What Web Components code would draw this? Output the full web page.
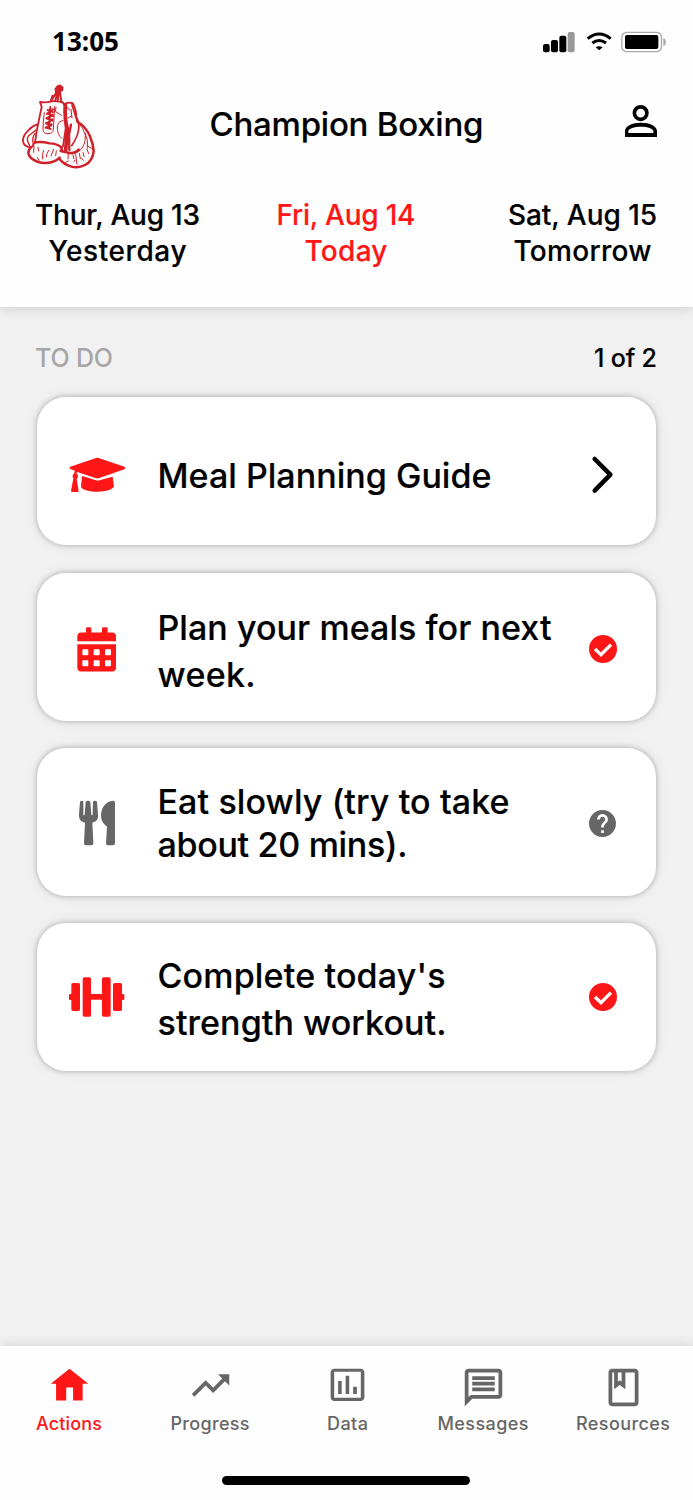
<!DOCTYPE html>
<html lang="en">
<head>
<meta charset="utf-8">
<title>Champion Boxing</title>
<style>
html,body{margin:0;padding:0;background:#fff}
body{width:693px;height:1500px;overflow:hidden;font-family:Inter,"Liberation Sans",sans-serif;font-weight:500;color:#000}
</style>
</head>
<body>
<boxing-app></boxing-app>
<script>
const ICONS = {
gloves: ['0 0 360 330', `<g fill="none" stroke="#d0202a" stroke-linecap="round" stroke-linejoin="round">
<path fill="#d0202a" stroke-width="5" d="M166 57l6-8 8-3 8 6-1 9-8 4 2 6-9 3-4-7z"/>
<path stroke-width="6" d="M170 66l-17 27M172 70l-7 24M176 68l-3 26M180 68l4 26M158 77l-6 17"/>
<path stroke-width="5.500" d="M120 96q18 3 34-2 17-2 34 4M120 96l5 15-6 28-9 45-5 34M188 97l6 10 3 70-8 52M196 101q10-5 20-2l1 8 11 35 4 14"/>
<path stroke-width="11" d="M196 104q-3 40 6 74l-5 62"/>
<path stroke-width="7" d="M207 180l1 60M213 164l-5 26M105 217q20-3 44 3 22 0 36 13"/>
<path stroke-width="5.500" d="M112 163q-15 4-27 18-18 17-16 34 4 15 25 18l11-16"/>
<path stroke-width="4" d="M108 180l-22 17q-9 9 3 30M105 190q-10 11-5 34"/>
<path stroke-width="7.500" d="M92 232q-14 18 1 32 19 16 46 15 25-1 40-16M184 232l2 11M178 266q13 17 34 23 22 7 43-4 23-12 26-41-1-21-11-45-12-28-36-43"/>
<path stroke-width="8" d="M182 243q16 3 26 6 18 2 28-10"/>
<path stroke-width="5" d="M218 99q12 22 11 42 20 37-14 86"/>
<path stroke-width="3" d="M232 155q20 20 24 40 2 36-23 52M256 190q10 22 6 45M133 128l-3 25-1 27q2 12 15 11 15 0 16-12l4-70M168 112l-2 12 18 12M190 152q-15 0-18 18-1 23 13 35M201 111l8 10M213 118l3 26M204 144l11-6"/>
<path stroke-width="6" d="M143 120l16 6M159 118l-18 14M142 130l17 8M158 134l-18 11M139 145l18 7M157 148l-18 13M138 159l16 8M155 163l-18 10M139 173l13 4M151 111l-3 62"/>
<path stroke-width="3" d="M102 229l-1 18M114 232l2 11M131 241q-7 13-3 26M146 241q-7 10-7 20M161 238l-8 20M112 262l5 9M169 242l-2 15M205 251l-1 16M219 255l3 12M227 253l4 30M238 250l3 16M249 248l3 12M261 238l5 13M262 227l12 8M205 273l-8 4M221 276l4-5M244 264l6 7"/>
</g>`],
person: ['159 165 360 330', `<path fill="#000" fill-rule="evenodd" d="M362 270a24 24 0 1 1 0 48.500a24 24 0 1 1 0-48.500zM362 281a13 13 0 1 0 0 26.500a13 13 0 1 0 0-26.500zM315 366v-18c0-15 22-25 48-25s48 10 48 25v18zM325 354h75v-6c0-7-17-13-37-13s-38 6-38 13z"/>`],
status: ['0 -45 519 210', `<rect x="69" y="87" width="20" height="25" rx="6"/><rect x="93" y="75" width="21" height="37" rx="6"/><rect x="118" y="62" width="21" height="50" rx="6"/><rect x="143" y="51" width="21" height="61" rx="6" fill="#999"/>
<g fill="none" stroke="#000" stroke-width="9"><path d="M203 71q35-28 69 0M217 84q20-15 41 0"/></g><path d="M227 97q10-7 21 0l-10.500 9z"/>
<rect x="305.500" y="52" width="119" height="58" rx="15" fill="none" stroke="#aaa" stroke-width="4"/><rect x="315" y="60" width="100" height="42" rx="6"/><path fill="#aaa" d="M430 69q8 3 8 12t-8 12z"/>`],
cap: ['21 21 360 444', `<path d="M198 204q4-1 8 0l77 26q6 4 0 8l-75 26q-6 2-12 0l-52-17q-5 0-5 3 5 3 5 9-1 5-4 7l6 37q0 3-3 3h-17q-3 0-3-3l7-38q-3-3-2-8 1-5 5-7 0-5 2-8l-14-5q-5-4 0-7zM156 258l42 13 5 1 45-12 4 29c-4 10-25 16-49 16s-46-5-50-15z"/>`],
calendar: ['21 548.500 360 444', `<path fill-rule="evenodd" d="M168 727v-12q0-4 4-4h8q4 0 4 4v12h32v-12q0-4 4-4h9q4 0 4 4v12h13q12 0 12 12v14H142v-14q0-12 12-12zM142 762h116v70q0 12-12 12h-92q-12 0-12-12zM160 777q-3 0-3 3v12q0 3 3 3h12q3 0 3-3v-12q0-3-3-3zM194 777q-3 0-3 3v12q0 3 3 3h12q3 0 3-3v-12q0-3-3-3zM228 777q-3 0-3 3v12q0 3 3 3h12q3 0 3-3v-12q0-3-3-3zM160 810q-3 0-3 3v12q0 3 3 3h12q3 0 3-3v-12q0-3-3-3zM194 810q-3 0-3 3v12q0 3 3 3h12q3 0 3-3v-12q0-3-3-3zM228 810q-3 0-3 3v12q0 3 3 3h12q3 0 3-3v-12q0-3-3-3z"/>`],
utensils: ['21 24 360 444', `<path d="M150 186q1-4 6-4 4 0 4 4v38q1 4 4 0l3-38q1-4 7-4t7 4l3 38q2 4 4 0l1-38q1-4 6-4t6 4l3 39c1 16-7 20-17 23l3 62q0 6-6 6h-17q-5 0-5-6l3-62c-11-3-19-8-18-25zM249 182q6 0 6 6v122q0 6-6 6h-16q-5 0-5-6l3-50c-12-9-18-19-18-35 1-24 17-42 36-43z"/>`],
dumbbell: ['21 549 360 444', `<path d="M117 765q0-3 3-3h4v-28q0-5 5-5h16q5 0 5 5v74q0 5-5 5h-16q-5 0-5-5v-28h-4q-3 0-3-3zM158 717q0-5 5-5h15q5 0 5 5v45h33v-45q0-5 5-5h16q5 0 5 5v108q0 5-5 5h-16q-5 0-5-5v-46h-33v46q0 5-5 5h-15q-5 0-5-5zM249 734q0-5 5-5h17q5 0 5 5v28h4q3 0 3 3v12q0 3-3 3h-4v28q0 5-5 5h-17q-5 0-5-5z"/>`],
chevron: ['0 0 84 111', `<path fill="none" stroke="#000" stroke-width="13.500" stroke-linecap="round" stroke-linejoin="round" d="M17 9l47 47-47 48"/>`],
check: ['0 0 84 84', `<circle cx="42" cy="42" r="42"/><path fill="none" stroke="#fff" stroke-width="10" d="M18 42l18 17 30-30"/>`],
help: ['2 2 20 20', `<path d="M12 2C6.480 2 2 6.480 2 12s4.480 10 10 10 10-4.480 10-10S17.520 2 12 2zm1 17h-2v-2h2v2zm2.070-7.750l-.9.920C13.450 12.900 13 13.500 13 15h-2v-.5c0-1.100.450-2.100 1.170-2.830l1.240-1.260c.370-.360.590-.860.590-1.410 0-1.100-.9-2-2-2s-2 .9-2 2H8c0-2.210 1.790-4 4-4s4 1.790 4 4c0 .880-.360 1.680-.930 2.250z"/>`],
home: ['0 0 24 24', `<path d="M9.900 20v-7h4.400v7h6.100v-9H24L12 3 0 11h3.400v9z" transform="translate(2 0) scale(.834 1)"/>`],
progress: ['0 0 24 24', `<path d="M16 6l2.290 2.290-4.880 4.880-4-4L2 16.590 3.410 18l6-6 4 4 6.300-6.290L22 12V6z"/>`],
data: ['0 0 24 24', `<path fill-rule="evenodd" d="M5 3h14c1.100 0 2 .9 2 2v13.200c0 1.100-.9 2-2 2H5c-1.100 0-2-.9-2-2V5c0-1.100.9-2 2-2zM4.900 4.700v13.800h14.200V4.700zM7 9.600h1.900v6.900H7zM11 6.800h1.900v9.700H11zM15 12.700h2v3.800h-2z"/>`],
messages: ['0 3 24 24', `<path d="M4 4h16v12H5.170L4 17.170V4m0-2c-1.100 0-1.990.9-1.990 2L2 22l4-4h14c1.100 0 2-.9 2-2V4c0-1.100-.9-2-2-2H4zm2 10h12v2H6v-2zm0-3h12v2H6V9zm0-3h12v2H6V6z" transform="translate(0 4)"/>`],
resources: ['0 3 24 24', `<path d="M18 2H6c-1.100 0-2 .9-2 2v16c0 1.100.9 2 2 2h12c1.100 0 2-.9 2-2V4c0-1.100-.9-2-2-2zM9 4h2v5l-1-.750L9 9V4zm9 16H6V4h1v9l3-2.250L13 13V4h5v16z" transform="translate(0 4)"/>`]
};

const make = (name, html, after) => customElements.define(name, class extends HTMLElement {
  connectedCallback() {
    if (this.shadowRoot) return;
    this.attachShadow({mode: 'open'}).innerHTML = typeof html === 'function' ? html(this) : html;
    if (after) after(this);
  }
});

make('ui-icon', el => {
  const [box, body] = ICONS[el.getAttribute('name')];
  return `<style>:host{display:block;flex:none}svg{display:block;width:100%;height:100%;overflow:visible}</style>
  <svg viewBox="${box}" preserveAspectRatio="none" fill="currentColor" aria-hidden="true">${body}</svg>`;
});

// One line of text tracked to occupy a set measure.
make('track-text', `<style>:host{display:block;white-space:nowrap;width:max-content}span{display:inline-block}</style><span><slot></slot></span>`, el => {
  const span = el.shadowRoot.querySelector('span');
  const target = +el.getAttribute('measure');
  const n = el.textContent.length;
  const gap = (target - span.getBoundingClientRect().width) / (n - 1);
  span.style.letterSpacing = gap + 'px';
  span.style.marginRight = -gap + 'px';
});

make('status-bar', `<style>
:host{display:flex;height:70px;justify-content:space-between;color:#000}
time{font:700 26px/36px "Open Sans","Noto Sans",sans-serif;padding:23px 0 0 52px}
ui-icon{width:173px;height:70px}</style>
<time><track-text measure="67">13:05</track-text></time><ui-icon name="status"></ui-icon>`);

make('app-header', el => `<style>
:host{display:flex;height:110px;justify-content:space-between}
ui-icon{width:120px;height:110px}
h1{margin:34px 0 0;font-size:33px;font-weight:inherit;line-height:40px}</style>
<ui-icon name="gloves"></ui-icon><h1><track-text measure="274">${el.getAttribute('heading')}</track-text></h1><ui-icon name="person"></ui-icon>`);

make('day-tab', el => `<style>
:host{display:flex;flex-direction:column;align-items:center;font-size:28px;line-height:36px;color:#000}
:host([active]){color:#ff1616}</style>
<track-text measure="${el.getAttribute('m1')}">${el.getAttribute('date')}</track-text><track-text measure="${el.getAttribute('m2')}">${el.getAttribute('label')}</track-text>`);

make('day-tabs', `<style>:host{display:grid;grid-template-columns:1fr auto 1fr;align-items:start;height:110.700px;padding:16.500px 36px 0 35px}
::slotted(:first-child){justify-self:start}::slotted(:last-child){justify-self:end}</style><slot></slot>`);

make('todo-heading', `<style>
:host{display:flex;justify-content:space-between;font-size:25px;line-height:30px;padding:0 36px 0 35px}
.l{color:#a6a6a6;-webkit-text-stroke:0}</style>
<track-text class="l" measure="78">TO DO</track-text><track-text measure="63">1 of 2</track-text>`);

make('todo-card', el => `<style>
:host{display:flex;height:148px;border-radius:29px;background:#fff;box-shadow:0 0 5px 1px rgba(0,0,0,.2),0 0 16px rgba(0,0,0,.06)}
.icon{width:120px;height:148px;color:#ff1616}
:host([muted]) ui-icon{color:#666}
.copy{flex:1;min-width:0;font-size:34px;line-height:var(--lh,47px);padding-top:var(--top);padding-left:.500px}
.end{width:67px;flex:none;padding-top:var(--end-top)}
.end ui-icon{width:28px;height:28px;color:#ff1616}
.end ui-icon[name=help]{width:27px;height:27px;color:#666}
.end ui-icon[name=chevron]{width:28px;height:37px}</style>
<ui-icon class="icon" name="${el.getAttribute('icon')}"></ui-icon>
<div class="copy"><slot></slot></div>
<div class="end"><ui-icon name="${el.getAttribute('state')}"></ui-icon></div>`);

make('nav-item', el => `<style>
:host{display:flex;flex-direction:column;align-items:center;color:#666;font-size:18px;line-height:24px}
:host([active]){color:#ff1616}
ui-icon{width:45px;height:45px;margin-bottom:4px}</style>
<ui-icon name="${el.getAttribute('icon')}"></ui-icon><track-text measure="${el.getAttribute('measure')}">${el.getAttribute('label')}</track-text>`);

make('bottom-nav', `<style>
:host{display:flex;flex-direction:column;align-items:center;background:#fefefe;height:154.500px;box-shadow:0 0 12px rgba(0,0,0,.14);position:relative;-webkit-text-stroke:0}
nav{display:grid;grid-template-columns:138px 144px 131px 140px 140px;width:693px;padding-top:17.500px;height:112.500px}
.home{width:248px;height:9px;border-radius:5px;background:#000;margin-right:1px}</style>
<nav><slot></slot></nav><div class="home"></div>`);

make('boxing-app', `<style>
:host{display:flex;flex-direction:column;width:693px;height:1500px;background:#f1f1f1;overflow:hidden;-webkit-text-stroke:.18px currentColor}
status-bar{-webkit-text-stroke:0}
header{background:#fefefe;height:306.700px;box-shadow:0 2px 12px rgba(0,0,0,.14);flex:none}
main{flex:1;padding-top:36px}
.list{display:grid;grid-template-columns:minmax(0,1fr);gap:27.300px;padding:24.700px 37px 0}
bottom-nav{flex:none}</style>
<header><status-bar></status-bar><app-header heading="Champion Boxing"></app-header>
<day-tabs><day-tab date="Thur, Aug 13" m1="165" label="Yesterday" m2="138"></day-tab><day-tab active date="Fri, Aug 14" m1="139" label="Today" m2="83"></day-tab><day-tab date="Sat, Aug 15" m1="149" label="Tomorrow" m2="138"></day-tab></day-tabs></header>
<main><todo-heading></todo-heading><div class="list">
<todo-card icon="cap" state="chevron" style="--top:54.700px;--end-top:59px"><track-text measure="334">Meal Planning Guide</track-text></todo-card>
<todo-card icon="calendar" state="check" style="--top:31.500px;--end-top:62.500px"><track-text measure="394">Plan your meals for next</track-text><track-text measure="98">week.</track-text></todo-card>
<todo-card muted icon="utensils" state="help" style="--top:32px;--lh:43.500px;--end-top:62px"><track-text measure="352">Eat slowly (try to take</track-text><track-text measure="250">about 20 mins).</track-text></todo-card>
<todo-card icon="dumbbell" state="check" style="--top:28.800px;--end-top:60px"><track-text measure="288">Complete today's</track-text><track-text measure="289">strength workout.</track-text></todo-card>
</div></main>
<bottom-nav><nav-item active icon="home" label="Actions" measure="66"></nav-item><nav-item icon="progress" label="Progress" measure="79"></nav-item><nav-item icon="data" label="Data" measure="41"></nav-item><nav-item icon="messages" label="Messages" measure="91"></nav-item><nav-item icon="resources" label="Resources" measure="94"></nav-item></bottom-nav>`);
</script>
</body>
</html>
